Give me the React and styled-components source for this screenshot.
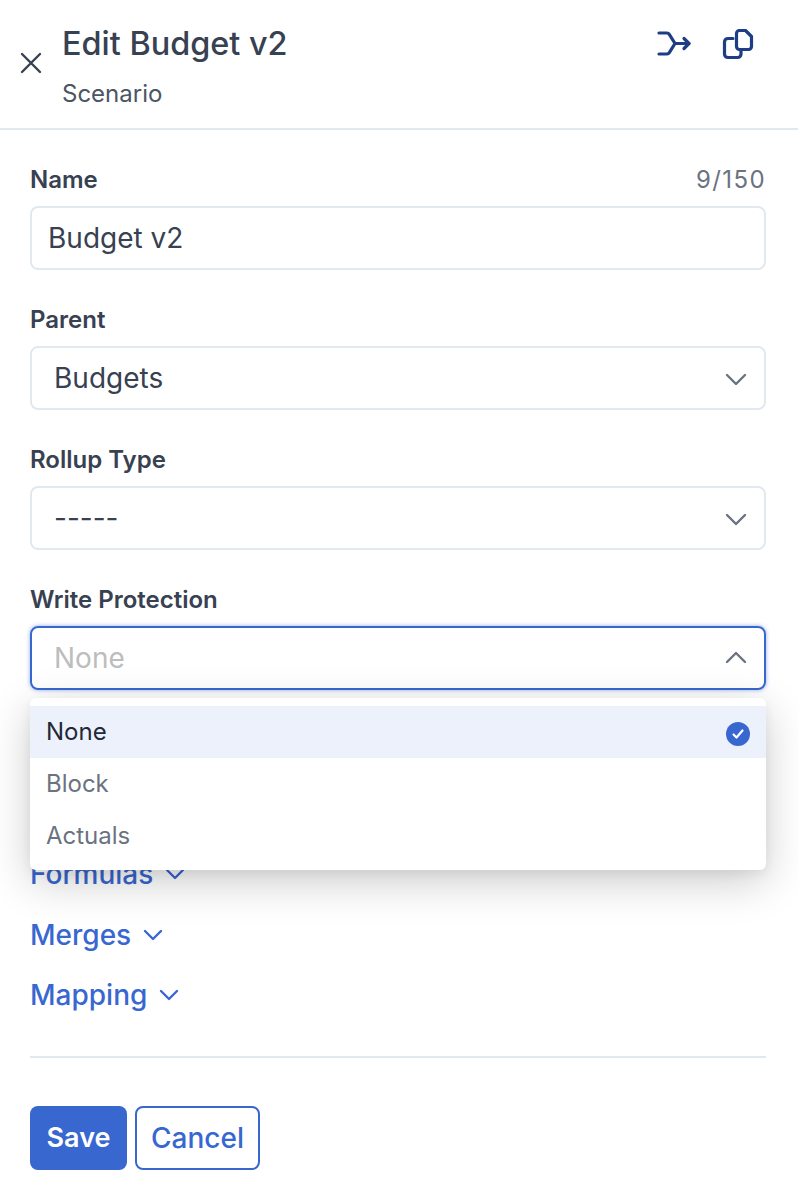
import { createGlobalStyle } from 'styled-components';
import styled from 'styled-components';

const GlobalStyle = createGlobalStyle`
    html, body {
        margin: 0;
        padding: 0;
        background: #fff;
        font-family: Inter, "Liberation Sans", sans-serif;
        overflow: hidden;
    }
    * {
        box-sizing: border-box;
    }
`

const fields = [
    { label: 'Parent', value: 'Budgets' },
    { label: 'Rollup Type', value: '-----' },
];

const sections = ['Formulas', 'Merges', 'Mapping'];

const options = ['None', 'Block', 'Actuals'];

function Chevron({ up }) {
    return (
        <svg width="24" height="24" viewBox="0 0 24 24" fill="none" stroke="currentColor" strokeWidth="2.4" strokeLinecap="round" strokeLinejoin="round">
            <path d={up ? 'M3 16l9-9 9 9' : 'M3 9l9 9 9-9'} />
        </svg>
    );
}

function App() {
    return (
        <Page>
            <GlobalStyle />
            <Header>
                <CloseButton>
                    <svg width="22" height="22" viewBox="0 0 22 22" fill="none" stroke="#374151" strokeWidth="2.4" strokeLinecap="round">
                        <path d="M2 2l18 18M20 2L2 20" />
                    </svg>
                </CloseButton>
                <Titles>
                    <Title>Edit Budget v2</Title>
                    <Subtitle>Scenario</Subtitle>
                </Titles>
                <Actions>
                    <svg width="36" height="30" viewBox="0 0 36 30" fill="none" stroke="#1f3d84" strokeWidth="3.2" strokeLinecap="round" strokeLinejoin="round">
                        <path d="M3 4h8c1 0 1.800.5 2.300 1.300L19 14.500h14" />
                        <path d="M3 25h8c1 0 1.800-.5 2.300-1.300L19 14.500" />
                        <path d="M28 9.500l5 5-5 5" />
                    </svg>
                    <svg width="32" height="32" viewBox="0 0 32 32" fill="none" stroke="#1f3d84" strokeWidth="3.2" strokeLinecap="round" strokeLinejoin="round">
                        <path d="M17.500 1.500h6l6 6v10c0 1.700-1.300 3-3 3h-9c-1.700 0-3-1.300-3-3v-13c0-1.700 1.300-3 3-3z" />
                        <path d="M11 9.500H6c-2 0-3.500 1.500-3.500 3.500v12c0 2 1.500 3.500 3.500 3.500h9.500c2 0 3.500-1.500 3.500-3.500v-3" />
                    </svg>
                </Actions>
            </Header>
            <Body>
                <Field>
                    <LabelRow>
                        <Label>Name</Label>
                        <Counter>9/150</Counter>
                    </LabelRow>
                    <NameInput>Budget v2</NameInput>
                </Field>
                {fields.map((field) => (
                    <Field key={field.label}>
                        <LabelRow>
                            <Label>{field.label}</Label>
                        </LabelRow>
                        <Select>
                            <span>{field.value}</span>
                            <Chevron />
                        </Select>
                    </Field>
                ))}
                <Field>
                    <LabelRow>
                        <Label>Write Protection</Label>
                    </LabelRow>
                    <Select $open>
                        <span>None</span>
                        <Chevron up />
                    </Select>
                    <Menu>
                        {options.map((option, i) => (
                            <Option key={option} $selected={i === 0}>
                                {option}
                                {i === 0 && (
                                    <svg width="24" height="24" viewBox="0 0 24 24">
                                        <circle cx="12" cy="12" r="12" fill="#3867d0" />
                                        <path d="M7.500 12.500l3 3 6-7" fill="none" stroke="#fff" strokeWidth="2.200" strokeLinecap="round" strokeLinejoin="round" />
                                    </svg>
                                )}
                            </Option>
                        ))}
                    </Menu>
                </Field>
                <Sections>
                    {sections.map((section) => (
                        <SectionToggle key={section}>
                            {section}
                            <svg width="20" height="12" viewBox="0 0 20 12" fill="none" stroke="currentColor" strokeWidth="2.400" strokeLinecap="round" strokeLinejoin="round">
                                <path d="M2 2l8 8 8-8" />
                            </svg>
                        </SectionToggle>
                    ))}
                </Sections>
                <Divider />
                <Buttons>
                    <SaveButton>Save</SaveButton>
                    <CancelButton>Cancel</CancelButton>
                </Buttons>
            </Body>
        </Page>
    )
}

const Page = styled.div`
    width: 798px;
    height: 1194px;
    background: #fff;
    color: #374151;
    overflow: hidden;
`
const Header = styled.header`
    height: 130px;
    border-bottom: 2px solid #e2e8f0;
    display: flex;
    align-items: flex-start;
    padding: 22px 44px 0 20px;
`
const CloseButton = styled.div`
    width: 42px;
    padding-top: 30px;
    flex-shrink: 0;
    display: flex;
`
const Titles = styled.div`
    flex: 1;
`
const Title = styled.div`
    font-size: 32.4px;
    font-weight: 500;
    line-height: 44px;
    color: #374151;
`
const Subtitle = styled.div`
    margin-top: 6px;
    font-size: 24px;
    line-height: 44px;
    color: #4b5563;
`
const Actions = styled.div`
    display: flex;
    align-items: flex-start;
    gap: 30px;
    padding-top: 7px;
`
const Body = styled.main`
    padding: 31px 32px 0 30px;
`
const Field = styled.div`
    position: relative;
    margin-bottom: 31px;
`
const LabelRow = styled.div`
    display: flex;
    justify-content: space-between;
    align-items: center;
    height: 36px;
    margin-bottom: 9px;
`
const Label = styled.label`
    font-size: 24px;
    font-weight: 600;
    color: #374151;
`
const Counter = styled.span`
    font-size: 24px;
    letter-spacing: 1.4px;
    color: #6b7280;
`
const NameInput = styled.div`
    height: 64px;
    border: 2px solid #e2e8f0;
    border-radius: 8px;
    display: flex;
    align-items: center;
    padding: 0 16px;
    font-size: 28px;
    color: #374151;
`
const Select = styled.div`
    height: 64px;
    border: 2px solid ${(props) => (props.$open ? '#3867d0' : '#e2e8f0')};
    border-radius: 8px;
    display: flex;
    align-items: center;
    justify-content: space-between;
    padding: 0 16px 0 22px;
    font-size: 28px;
    color: ${(props) => (props.$open ? '#bdbdbd' : '#374151')};
    box-shadow: ${(props) => (props.$open ? '0 0 4px rgba(56, 103, 208, 0.55)' : 'none')};
    svg {
        color: #6b7280;
    }
`
const Menu = styled.div`
    position: absolute;
    left: 0;
    right: 0;
    top: 117px;
    height: 172px;
    padding: 8px 0 0;
    background: #fff;
    border-radius: 6px;
    box-shadow: 0 12px 44px rgba(0, 0, 0, 0.2), 0 4px 12px rgba(0, 0, 0, 0.06);
    z-index: 2;
`
const Option = styled.div`
    height: 52px;
    display: flex;
    align-items: center;
    justify-content: space-between;
    padding: 0 16px 2px;
    font-size: 24px;
    background: ${(props) => (props.$selected ? '#edf1fc' : '#fff')};
    color: ${(props) => (props.$selected ? '#1f2937' : '#6b7280')};
    svg {
        margin-top: 6px;
    }
`
const Sections = styled.div`
    padding-top: 131px;
    display: flex;
    flex-direction: column;
    gap: 16px;
`
const SectionToggle = styled.div`
    display: flex;
    align-items: center;
    gap: 12px;
    height: 44.500px;
    font-size: 28px;
    font-weight: 500;
    color: #3867d0;
`
const Divider = styled.hr`
    margin: 38px 0 0;
    border: 0;
    border-top: 2px solid #e2e8f0;
`
const Buttons = styled.div`
    display: flex;
    gap: 8px;
    margin-top: 48px;
`
const SaveButton = styled.button`
    height: 64px;
    width: 97px;
    padding: 0;
    border: 0;
    border-radius: 8px;
    background: #3867d0;
    color: #fff;
    font-family: inherit;
    font-size: 27px;
    font-weight: 600;
`
const CancelButton = styled.button`
    height: 64px;
    width: 125px;
    padding: 0;
    border: 2px solid #3867d0;
    border-radius: 8px;
    background: #fff;
    color: #3867d0;
    font-family: inherit;
    font-size: 28px;
    font-weight: 500;
`

export default App
